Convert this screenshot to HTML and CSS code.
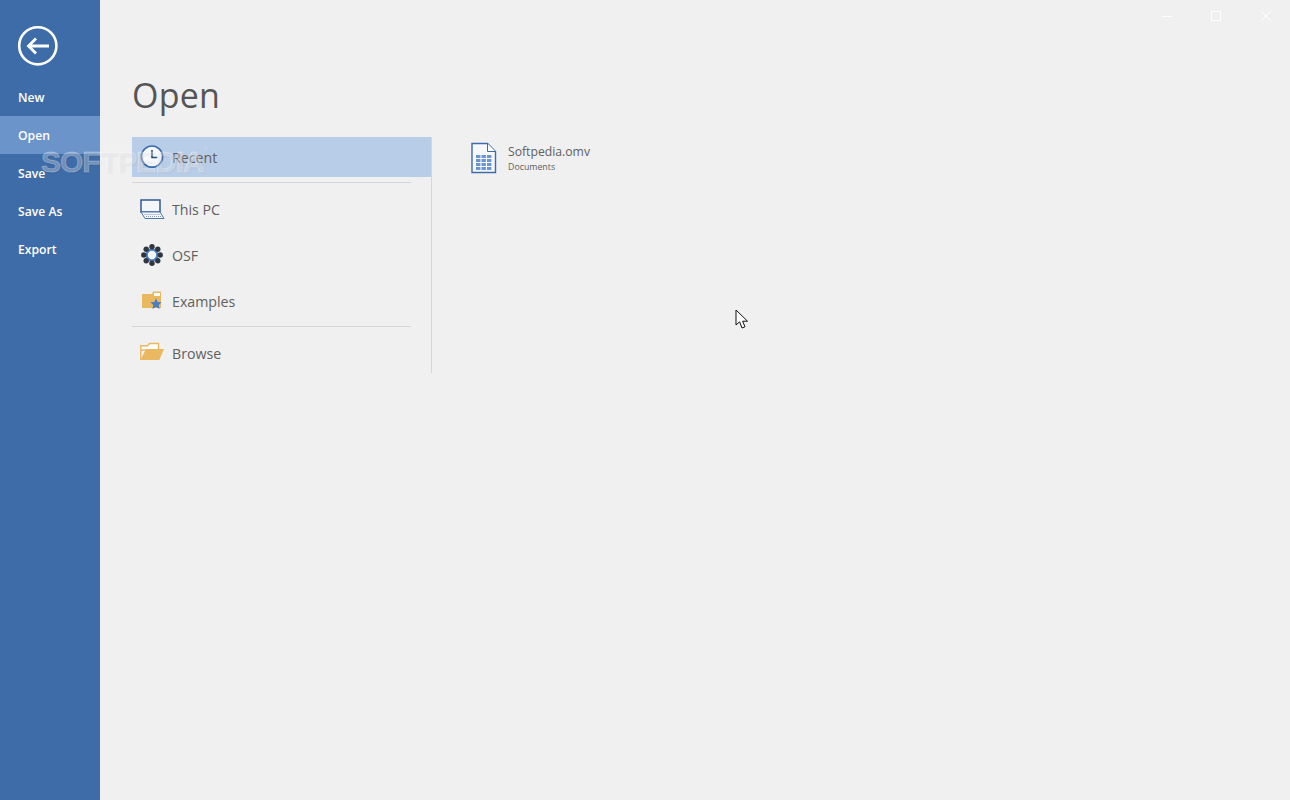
FILE: index.html
```html
<!DOCTYPE html>
<html>
<head>
  <title>Open</title>
  <link rel="stylesheet" href="styles.css">
</head>
<body>
  <div class="app">
    <div class="sidebar">
      <div class="back-row">
        <svg class="back-icon" width="42" height="42" viewBox="0 0 42 42">
          <circle cx="20.8" cy="20.8" r="18.6" fill="none" stroke="#fff" stroke-width="2.6"/>
          <path d="M32 21H11.5M19 13.5L11.5 21l7.5 7.5" fill="none" stroke="#fff" stroke-width="2.8"/>
        </svg>
      </div>
      <ul class="side-menu">
        <li>New</li>
        <li class="active">Open</li>
        <li>Save</li>
        <li>Save As</li>
        <li>Export</li>
      </ul>
    </div>

    <div class="main">
      <div class="window-buttons">
        <svg width="50" height="32" viewBox="0 0 50 32"><path d="M22 16.5h10" stroke="#fff"/></svg>
        <svg width="50" height="32" viewBox="0 0 50 32"><rect x="21.5" y="11.5" width="9" height="9" fill="none" stroke="#fff"/></svg>
        <svg width="50" height="32" viewBox="0 0 50 32"><path d="M21 11l10 10M31 11L21 21" stroke="#fff"/></svg>
      </div>
      <h1>Open</h1>
      <div class="columns">
        <div class="places">
          <div class="place selected">
            <svg width="26" height="26" viewBox="0 0 26 26">
              <circle cx="13" cy="12.6" r="10.6" fill="#f6f8fb" stroke="#3e6ca8" stroke-width="1.7"/>
              <path d="M13 6v7.5h5.5" fill="none" stroke="#2b4a78" stroke-width="1.6"/>
            </svg>
            <span>Recent</span>
          </div>
          <div class="sep"></div>
          <div class="place">
            <svg width="26" height="26" viewBox="0 0 26 26">
              <rect x="2" y="4" width="19" height="12" fill="#f4f6fa" stroke="#2f5a94" stroke-width="1.5"/>
              <path d="M2 16l4 6.5h19L21 16z" fill="#f4f6fa" stroke="#4a76ae"/>
              <path d="M5.5 18.5h16M7 20.5h16" stroke="#8a9ab2" stroke-dasharray="1 1"/>
            </svg>
            <span>This PC</span>
          </div>
          <div class="place">
            <svg width="26" height="26" viewBox="0 0 26 26">
              <circle cx="13" cy="13" r="5.4" fill="#f4f6fa" stroke="#4f82c4" stroke-width="2.4"/>
              <g fill="#2f3640">
                <circle cx="13" cy="4.8" r="2.7"/>
                <circle cx="13" cy="21.2" r="2.7"/>
                <circle cx="4.8" cy="13" r="2.7"/>
                <circle cx="21.2" cy="13" r="2.7"/>
                <circle cx="7.2" cy="7.2" r="2.7"/>
                <circle cx="18.8" cy="7.2" r="2.7"/>
                <circle cx="7.2" cy="18.8" r="2.7"/>
                <circle cx="18.8" cy="18.8" r="2.7"/>
              </g>
            </svg>
            <span>OSF</span>
          </div>
          <div class="place">
            <svg width="26" height="26" viewBox="0 0 26 26">
              <path d="M3 6H13l1-2.5h8V20H3z" fill="#eab95f"/>
              <path d="M15 5h6v3h-6z" fill="#fff"/>
              <path d="M17 10.2l1.7 3.7 4 .4-3 2.7.9 4-3.6-2.1-3.6 2.1.9-4-3-2.7 4-.4z" fill="#4a7fc4"/>
            </svg>
            <span>Examples</span>
          </div>
          <div class="sep"></div>
          <div class="place">
            <svg width="26" height="26" viewBox="0 0 26 26">
              <path d="M1.8 20V5.8H8.5L10.5 3.5H19.5V10H1.8z" fill="#fff" stroke="#eab95f" stroke-width="1.4"/>
              <path d="M7 9H25L20.3 20H1.5z" fill="#eab95f"/>
            </svg>
            <span>Browse</span>
          </div>
        </div>

        <div class="recent-files">
          <div class="file">
            <svg width="26" height="32" viewBox="0 0 26 32">
              <path d="M1 1.5h15.5l8 8v21H1z" fill="#f6f8fb" stroke="#3e6ca8" stroke-width="1.4"/>
              <path d="M16.5 1.5v8h8" fill="#fff" stroke="#3e6ca8"/>
              <g fill="#6a97d2">
                <rect x="5" y="13" width="4.4" height="3"/><rect x="10.5" y="13" width="4.4" height="3"/><rect x="16" y="13" width="4.4" height="3"/>
                <rect x="5" y="17" width="4.4" height="3"/><rect x="10.5" y="17" width="4.4" height="3"/><rect x="16" y="17" width="4.4" height="3"/>
                <rect x="5" y="21" width="4.4" height="3"/><rect x="10.5" y="21" width="4.4" height="3"/><rect x="16" y="21" width="4.4" height="3"/>
                <rect x="5" y="25" width="4.4" height="3"/><rect x="10.5" y="25" width="4.4" height="3"/><rect x="16" y="25" width="4.4" height="3"/>
              </g>
            </svg>
            <div class="file-text">
              <div class="file-name">Softpedia.omv</div>
              <div class="file-path">Documents</div>
            </div>
          </div>
        </div>
      </div>
    </div>
  </div>

  <div class="watermark">SOFTPEDIA<sup>®</sup></div>

  <svg class="cursor" width="14" height="21" viewBox="0 0 14 21">
    <path d="M1 1v15l3.6-3.2L7 19l3-1.2-2.4-5.6H12.5z" fill="#fff" stroke="#111" stroke-width="1"/>
  </svg>
</body>
</html>
```

FILE: styles.css
```css
/* page */
html, body {
  height: 100%;
}

body {
  margin: 0;
  background-color: #f0f0f0;
  font-family: "Open Sans", "Noto Sans", sans-serif;
  overflow: hidden;
}

.app {
  display: flex;
  height: 800px;
}

/* left blue bar */
.sidebar {
  width: 100px;
  flex-shrink: 0;
  background-color: #3e6ca8;
  color: #fff;
}

.back-row {
  height: 78px;
  padding: 25px 0 0 17px;
  box-sizing: border-box;
}

.back-icon {
  display: block;
}

.side-menu {
  list-style-type: none;
  margin: 0;
  padding: 0;
}

.side-menu li {
  height: 38px;
  line-height: 40px;
  padding-left: 18px;
  font-size: 12.2px;
  font-weight: 600;
}

.side-menu li.active {
  background-color: #6b94cb;
}

/* content */
.main {
  flex: 1;
  padding-left: 32px;
  position: relative;
}

.window-buttons {
  display: flex;
  justify-content: flex-end;
  height: 32px;
}

.window-buttons svg {
  display: block;
}

h1 {
  margin: 37px 0 0;
  height: 68px;
  line-height: 52px;
  font-size: 34px;
  font-weight: 400;
  color: #555;
  letter-spacing: 0.2px;
}

.columns {
  display: flex;
}

.places {
  width: 299px;
  height: 236px;
  border-right: 1px solid #d6d6d6;
}

.place {
  display: flex;
  align-items: center;
  height: 40px;
  padding-left: 7px;
  margin-bottom: 6px;
  font-size: 14.2px;
  color: #606060;
}

.place:last-child {
  margin-bottom: 0;
}

.place svg {
  margin-right: 7px;
}

.place.selected {
  background-color: #b8cde8;
  margin-bottom: 5px;
}

.sep {
  width: 279px;
  height: 1px;
  background-color: #d6d6d6;
  margin-bottom: 6px;
}

.place + .sep {
  margin-top: -1px;
}

.place.selected + .sep {
  margin-top: 0;
}

/* recent file list */
.recent-files {
  padding: 5px 0 0 39px;
}

.file {
  display: flex;
  align-items: center;
}

.file-text {
  margin-left: 11px;
}

.file-name {
  font-size: 12.2px;
  line-height: 18px;
  color: #606060;
}

.file-path {
  font-size: 8.8px;
  line-height: 13px;
  color: #606060;
}

/* stuff on top */
.watermark {
  position: absolute;
  left: 41px;
  top: 145px;
  font-family: "Liberation Sans", sans-serif;
  font-size: 30px;
  font-weight: 700;
  color: rgba(255, 255, 255, 0.3);
  letter-spacing: -1px;
  -webkit-text-stroke: 1px rgba(255, 255, 255, 0.25);
  text-shadow: 1px 1px 2px rgba(0, 0, 0, 0.07);
}

.watermark sup {
  font-size: 7px;
  font-weight: 400;
  letter-spacing: 0;
  -webkit-text-stroke: 0;
  vertical-align: 20px;
  line-height: 0;
}

.cursor {
  position: absolute;
  left: 735px;
  top: 309px;
}
```
